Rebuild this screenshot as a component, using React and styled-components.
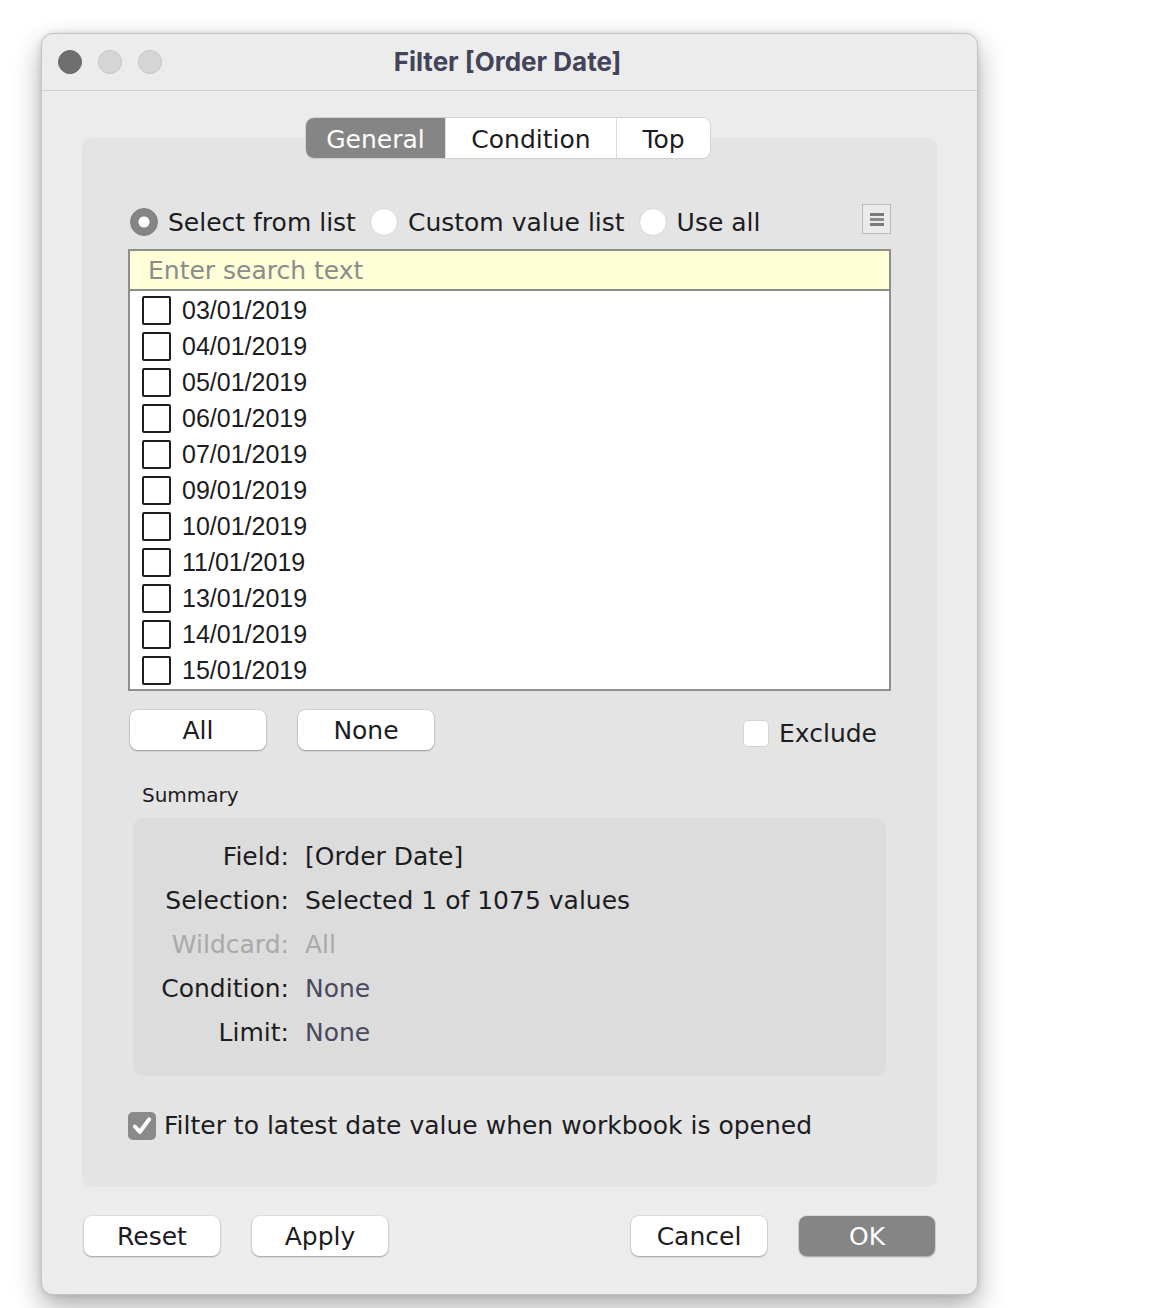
import React from "react";
import styled, { createGlobalStyle } from "styled-components";

const TEXT = "#1c1c22";
const UI_FONT = `"DejaVu Sans", "Noto Sans", sans-serif`;

const GlobalStyle = createGlobalStyle`
  html, body {
    margin: 0;
    background: #ffffff;
  }
  * {
    box-sizing: border-box;
  }
`;

const dates = [
  "03/01/2019",
  "04/01/2019",
  "05/01/2019",
  "06/01/2019",
  "07/01/2019",
  "09/01/2019",
  "10/01/2019",
  "11/01/2019",
  "13/01/2019",
  "14/01/2019",
  "15/01/2019",
];

const summary = [
  { label: "Field:", value: "[Order Date]", tone: "dark" },
  { label: "Selection:", value: "Selected 1 of 1075 values", tone: "dark" },
  { label: "Wildcard:", value: "All", tone: "muted" },
  { label: "Condition:", value: "None", tone: "slate" },
  { label: "Limit:", value: "None", tone: "slate" },
];

function MenuIcon() {
  return (
    <svg width="16" height="16" viewBox="0 0 16 16">
      <rect x="1" y="2" width="14" height="3" fill="#7a7a7a" />
      <rect x="1" y="7" width="14" height="3" fill="#8a8a8a" />
      <rect x="1" y="12" width="14" height="3" fill="#7a7a7a" />
    </svg>
  );
}

function CheckMark() {
  return (
    <svg width="22" height="22" viewBox="0 0 20 20">
      <path
        d="M3.5 10.5 L8 15.5 L16.5 4"
        fill="none"
        stroke="#ffffff"
        strokeWidth="3.6"
        strokeLinecap="round"
        strokeLinejoin="round"
      />
    </svg>
  );
}

function App() {
  return (
    <>
      <GlobalStyle />
      <Page>
        <Window>
          <TitleBar>
            <Lights>
              <Light $active />
              <Light />
              <Light />
            </Lights>
            <Title>Filter [Order Date]</Title>
            <span />
          </TitleBar>

          <Body>
            <TabsRow>
              <Tabs>
                <Tab $active $w={139}>General</Tab>
                <Tab $w={171}>Condition</Tab>
                <Tab $w={94}>Top</Tab>
              </Tabs>
            </TabsRow>

            <Panel>
              <RadioRow>
                <Radio $checked />
                <RadioLabel>Select from list</RadioLabel>
                <Radio />
                <RadioLabel>Custom value list</RadioLabel>
                <Radio />
                <RadioLabel>Use all</RadioLabel>
                <MenuButton>
                  <MenuIcon />
                </MenuButton>
              </RadioRow>

              <Search placeholder="Enter search text" />
              <List>
                {dates.map((d) => (
                  <ListRow key={d}>
                    <Box />
                    <DateText>{d}</DateText>
                  </ListRow>
                ))}
              </List>

              <ActionRow>
                <Button>All</Button>
                <Button>None</Button>
                <Exclude>
                  <SoftBox />
                  <ExcludeLabel>Exclude</ExcludeLabel>
                </Exclude>
              </ActionRow>

              <SummaryTitle>Summary</SummaryTitle>
              <SummaryBox>
                {summary.map((s) => (
                  <React.Fragment key={s.label}>
                    <SumLabel $tone={s.tone}>{s.label}</SumLabel>
                    <SumValue $tone={s.tone}>{s.value}</SumValue>
                  </React.Fragment>
                ))}
              </SummaryBox>

              <LatestRow>
                <CheckedBox>
                  <CheckMark />
                </CheckedBox>
                <LatestLabel>
                  Filter to latest date value when workbook is opened
                </LatestLabel>
              </LatestRow>
            </Panel>

            <Footer>
              <Group>
                <Button>Reset</Button>
                <Button>Apply</Button>
              </Group>
              <Group>
                <Button>Cancel</Button>
                <Button $primary>OK</Button>
              </Group>
            </Footer>
          </Body>
        </Window>
      </Page>
    </>
  );
}

const Page = styled.div`
  padding: 33px 0 14px 41px;
  font-family: ${UI_FONT};
  color: ${TEXT};
`;

const Window = styled.div`
  width: 937px;
  background: #ececec;
  border: 1px solid #c2c2c2;
  border-radius: 12px;
  box-shadow: 0 12px 28px rgba(0, 0, 0, 0.32), 0 0 6px rgba(0, 0, 0, 0.12);
  overflow: hidden;
`;

const TitleBar = styled.div`
  display: grid;
  grid-template-columns: 1fr auto 1fr;
  align-items: center;
  height: 57px;
  padding: 0 16px;
  border-bottom: 1px solid #cdcdcd;
`;

const Lights = styled.div`
  display: flex;
  gap: 16px;
`;

const Light = styled.span`
  width: 24px;
  height: 24px;
  border-radius: 50%;
  background: ${(p) => (p.$active ? "#6f6f6f" : "#d5d5d5")};
  border: 1px solid ${(p) => (p.$active ? "#666" : "#c6c6c6")};
`;

const Title = styled.div`
  font-family: Inter, "Liberation Sans", sans-serif;
  font-weight: 700;
  font-size: 26px;
  color: #43435a;
  padding-right: 4px;
  margin-top: -2px;
`;

const Body = styled.div`
  padding: 27px 40px 38px;
`;

const TabsRow = styled.div`
  display: flex;
  justify-content: center;
  position: relative;
  z-index: 1;
  margin-bottom: -20px;
  padding-right: 3px;
`;

const Tabs = styled.div`
  display: flex;
  height: 40px;
  background: #ffffff;
  border-radius: 8px;
  overflow: hidden;
  box-shadow: 0 0 0 1px #d2d2d2, 0 1px 1px rgba(0, 0, 0, 0.12);
`;

const Tab = styled.div`
  width: ${(p) => p.$w}px;
  display: flex;
  align-items: center;
  justify-content: center;
  padding-top: 2px;
  font-size: 25px;
  color: ${(p) => (p.$active ? "#ffffff" : TEXT)};
  background: ${(p) => (p.$active ? "#858585" : "#ffffff")};
  & + & {
    border-left: 1px solid #dcdcdc;
  }
`;

const Panel = styled.div`
  background: #e4e4e4;
  border-radius: 9px;
  padding: 67px 46px 47px;
`;

const RadioRow = styled.div`
  display: flex;
  align-items: center;
  height: 34px;
`;

const Radio = styled.span`
  width: 28px;
  height: 28px;
  border-radius: 50%;
  flex-shrink: 0;
  margin-left: 14px;
  background: ${(p) =>
    p.$checked
      ? "radial-gradient(circle, #ffffff 0 5px, #858585 6px)"
      : "#ffffff"};
  border: 1px solid ${(p) => (p.$checked ? "#7a7a7a" : "#d6d6d6")};
  &:first-child {
    margin-left: 2px;
  }
`;

const RadioLabel = styled.span`
  margin-left: 10px;
  font-size: 25px;
  white-space: nowrap;
`;

const MenuButton = styled.div`
  margin-left: auto;
  width: 29px;
  height: 30px;
  display: flex;
  align-items: center;
  justify-content: center;
  background: #ebebeb;
  border: 1px solid #b8b8b8;
  align-self: flex-start;
  margin-top: -1px;
`;

const Search = styled.input`
  display: block;
  width: 100%;
  height: 42px;
  margin-top: 10px;
  padding: 0 0 0 18px;
  background: #fefed7;
  border: 2px solid #8e8e8e;
  font-family: ${UI_FONT};
  font-size: 25px;
  color: ${TEXT};
  outline: none;
  &::placeholder {
    color: #8c8c8c;
  }
`;

const List = styled.div`
  height: 400px;
  background: #ffffff;
  border: 2px solid #8e8e8e;
  border-top: none;
  padding-top: 1px;
  overflow: hidden;
`;

const ListRow = styled.div`
  display: flex;
  align-items: center;
  height: 36px;
  padding-left: 12px;
`;

const Box = styled.span`
  width: 29px;
  height: 29px;
  border: 2px solid #1e1e1e;
  border-radius: 2px;
  flex-shrink: 0;
`;

const DateText = styled.span`
  margin-left: 11px;
  font-family: "Liberation Sans", Arial, sans-serif;
  font-size: 25px;
`;

const ActionRow = styled.div`
  display: flex;
  align-items: center;
  gap: 32px;
  margin-top: 19px;
  padding-left: 2px;
`;

const Button = styled.div`
  width: 136px;
  height: 40px;
  display: flex;
  align-items: center;
  justify-content: center;
  border-radius: 8px;
  font-size: 25px;
  color: ${(p) => (p.$primary ? "#ffffff" : TEXT)};
  background: ${(p) => (p.$primary ? "#858585" : "#ffffff")};
  box-shadow: 0 0 0 1px rgba(0, 0, 0, 0.06), 0 1px 2px rgba(0, 0, 0, 0.28);
`;

const Exclude = styled.div`
  margin-left: auto;
  margin-right: 14px;
  margin-top: 6px;
  display: flex;
  align-items: center;
`;

const SoftBox = styled.span`
  width: 26px;
  height: 27px;
  border-radius: 5px;
  background: #ffffff;
  border: 1px solid #d4d4d4;
`;

const ExcludeLabel = styled.span`
  margin-left: 10px;
  font-size: 25px;
`;

const SummaryTitle = styled.div`
  margin-top: 33px;
  padding-left: 14px;
  font-size: 20px;
  line-height: 24px;
`;

const SummaryBox = styled.div`
  margin: 11px 5px 0;
  padding: 16px 0 22px;
  background: #dcdcdc;
  border-radius: 10px;
  display: grid;
  grid-template-columns: 156px 1fr;
  column-gap: 16px;
  grid-auto-rows: 44px;
  align-items: center;
  font-size: 25px;
`;

const toneColor = {
  dark: TEXT,
  muted: "#a9a9a9",
  slate: "#4a4a5e",
};

const SumLabel = styled.div`
  text-align: right;
  color: ${(p) => (p.$tone === "muted" ? toneColor.muted : TEXT)};
`;

const SumValue = styled.div`
  color: ${(p) => toneColor[p.$tone]};
`;

const LatestRow = styled.div`
  display: flex;
  align-items: center;
  margin-top: 35px;
`;

const CheckedBox = styled.span`
  width: 28px;
  height: 28px;
  border-radius: 5px;
  background: #8a8a8a;
  display: flex;
  align-items: center;
  justify-content: center;
`;

const LatestLabel = styled.span`
  margin-left: 8px;
  font-size: 25px;
`;

const Footer = styled.div`
  display: flex;
  justify-content: space-between;
  margin-top: 29px;
  padding: 0 2px;
`;

const Group = styled.div`
  display: flex;
  gap: 32px;
`;

export default App;
